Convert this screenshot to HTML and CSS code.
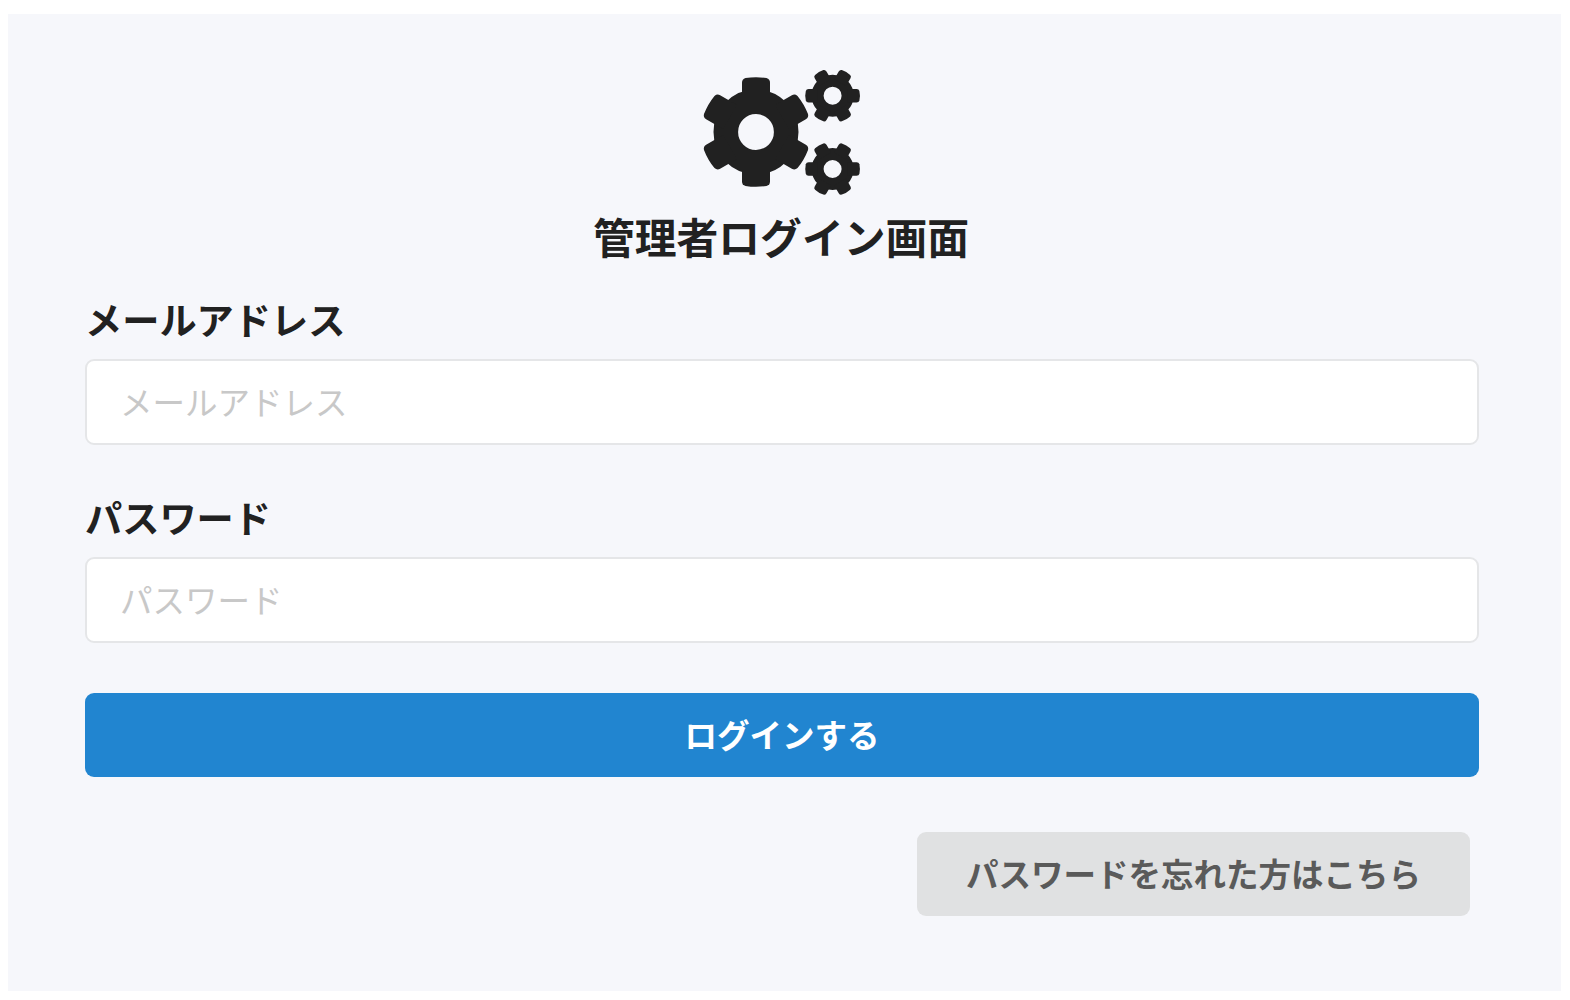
FILE: index.html
```
<!DOCTYPE html>
<html lang="ja">
<head>
    <meta charset="UTF-8">
    <meta name="viewport" content="width=device-width, initial-scale=1.0">
    <title>管理者ログイン画面</title>
    <link rel="stylesheet" href="styles.css">
</head>
<body>

<main class="login-panel">
    <header class="login-header">
        <svg class="cogs" viewBox="0 0 180 145" aria-hidden="true">
            <defs>
                <path id="tooth" d="M-14 -30V-49.500Q-14 -53 -10.500 -54Q0 -55.700 10.500 -54Q14 -53 14 -49.500V-30Z"/>
                <path id="small-tooth" d="M-6.800 -15V-24Q-6.800 -26.300 -4.800 -26.800Q0 -27.900 4.800 -26.800Q6.800 -26.300 6.800 -24V-15Z"/>
                <g id="small-cog">
                    <circle r="15" fill="none" stroke="currentColor" stroke-width="12"/>
                    <use href="#small-tooth" transform="rotate(30)"/>
                    <use href="#small-tooth" transform="rotate(90)"/>
                    <use href="#small-tooth" transform="rotate(150)"/>
                    <use href="#small-tooth" transform="rotate(210)"/>
                    <use href="#small-tooth" transform="rotate(270)"/>
                    <use href="#small-tooth" transform="rotate(330)"/>
                </g>
            </defs>
            <g transform="translate(66 72)">
                <circle r="30.200" fill="none" stroke="currentColor" stroke-width="24.600"/>
                <use href="#tooth"/>
                <use href="#tooth" transform="rotate(60)"/>
                <use href="#tooth" transform="rotate(120)"/>
                <use href="#tooth" transform="rotate(180)"/>
                <use href="#tooth" transform="rotate(240)"/>
                <use href="#tooth" transform="rotate(300)"/>
            </g>
            <use href="#small-cog" transform="translate(142.600 35.700)"/>
            <use href="#small-cog" transform="translate(142.600 109)"/>
        </svg>
        <h1 class="login-title">管理者ログイン画面</h1>
    </header>

    <form class="login-form">
        <div class="field">
            <label for="email">メールアドレス</label>
            <input type="email" id="email" placeholder="メールアドレス">
        </div>
        <div class="field">
            <label for="password">パスワード</label>
            <input type="password" id="password" placeholder="パスワード">
        </div>
        <button type="submit" class="button primary">ログインする</button>
        <a href="#" class="button forgot">パスワードを忘れた方はこちら</a>
    </form>
</main>

</body>
</html>
```

FILE: styles.css
```
* {
    box-sizing: border-box;
}

body {
    margin: 0;
    padding: 14px 9px 9px 8px;
    height: 1000px;
    background-color: #fff;
    color: #212121;
    font-family: "Noto Sans CJK JP", sans-serif;
}

.login-panel {
    height: 977px;
    padding: 46px 82px 0 77px;
    background-color: #f6f7fb;
}

.login-header {
    display: flex;
    flex-direction: column;
    align-items: center;
}

.cogs {
    width: 180px;
    height: 145px;
    margin-right: 4px;
    color: #212121;
    fill: currentColor;
}

.login-title {
    margin: 1px 2px 0 0;
    font-size: 41.8px;
    font-weight: bold;
    line-height: 60px;
}

.login-form {
    display: flex;
    flex-direction: column;
    margin-top: 27px;
}

.field {
    display: flex;
    flex-direction: column;
    margin-bottom: 46px;
}

.field label {
    margin-bottom: 14px;
    font-size: 37.2px;
    font-weight: bold;
    line-height: 52px;
}

.field input {
    height: 86px;
    padding: 0 33px 3px;
    border: 2px solid #e5e6e8;
    border-radius: 9px;
    background-color: #fff;
    font-family: inherit;
    font-size: 32.5px;
}

.field input::placeholder {
    color: #c8c8c8;
}

.button {
    height: 84px;
    border: none;
    border-radius: 9px;
    font-family: inherit;
    font-size: 32.5px;
    font-weight: bold;
    line-height: 81px;
    text-align: center;
    text-decoration: none;
    cursor: pointer;
}

.primary {
    margin-top: 4px;
    padding: 0 0 3px;
    background-color: #2185d0;
    color: #fff;
}

.forgot {
    align-self: flex-end;
    width: 553px;
    margin: 55px 9px 0 0;
    background-color: #e0e1e2;
    color: #5a5a5a;
}
```
